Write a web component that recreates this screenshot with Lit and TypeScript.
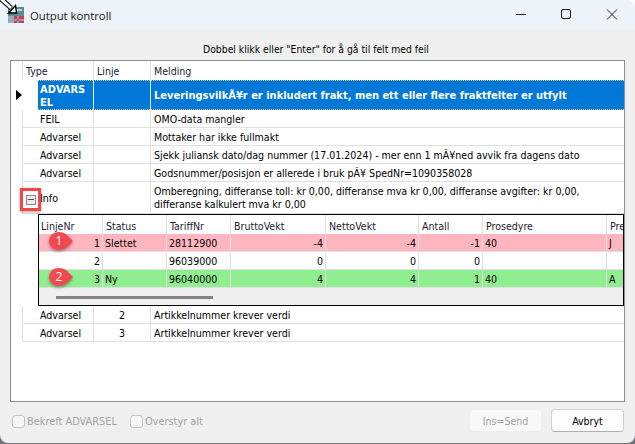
import { LitElement, html, css } from "lit";
import { customElement } from "lit/decorators.js";

const msgs = [
  { t: "FEIL", l: "", m: "OMO-data mangler" },
  { t: "Advarsel", l: "", m: "Mottaker har ikke fullmakt" },
  { t: "Advarsel", l: "", m: "Sjekk juliansk dato/dag nummer (17.01.2024) - mer enn 1 mÃ¥ned avvik fra dagens dato" },
  { t: "Advarsel", l: "", m: "Godsnummer/posisjon er allerede i bruk pÃ¥ SpedNr=1090358028" },
];
const sub = [
  { c: "pink", v: ["1", "Slettet", "28112900", "-4", "-4", "-1", "40", "J"] },
  { c: "", v: ["2", "", "96039000", "0", "0", "0", "", ""] },
  { c: "green", v: ["3", "Ny", "96040000", "4", "4", "1", "40", "A"] },
];
const subHead = ["LinjeNr", "Status", "TariffNr", "BruttoVekt", "NettoVekt", "Antall", "Prosedyre", "Pre"];
const rightCols = new Set([0, 3, 4, 5]);

@customElement("app-root")
export class AppRoot extends LitElement {
  static styles = css`
    :host { display: block; width: 635px; height: 444px; background: linear-gradient(#ffffff 0 50%, #74787d 50% 100%); overflow: hidden; position: relative; }
    * { box-sizing: border-box; }
    .win { width: 635px; height: 443px; background: #f0f0f0; border-radius: 8px; overflow: hidden; display: flex; flex-direction: column;
      font: 10.55px "DejaVu Sans Condensed", "DejaVu Sans", sans-serif; color: #000; }
    .title { height: 30px; flex: none; background: #eef2f9; display: flex; align-items: center; padding-left: 8px; }
    .title span { margin-left: 6px; font: 11.3px "Open Sans", sans-serif; color: #1a1a1a; }
    .winbtns { margin-left: auto; display: flex; }
    .winbtns svg { width: 46px; height: 30px; display: block; }
    .hint { height: 30px; flex: none; display: flex; align-items: center; justify-content: center; padding-top: 7px; padding-right: 3px; color: #000; font-size: 10.3px; }
    .grid { margin: 0 10px; width: 615px; height: 342px; flex: none; background: #fff; border: 1px solid #8a8f96; display: flex; flex-direction: column; position: relative; }
    .row { display: grid; grid-template-columns: 11px 71px 57px 1fr; flex: none; }
    .row > div { overflow: hidden; }
    .ind { display: flex; align-items: center; justify-content: center; }
    .c { border-left: 1px solid #e0e0e0; border-bottom: 1px solid #e0e0e0; padding: 1px 0 0 3px; display: flex; align-items: center; line-height: 13px; }
    .c.tp { padding-left: 17px; }
    .c.ctr { justify-content: center; padding: 1px 0 0; }
    .head { height: 19px; }
    .head .c { border-bottom: none; color: #1c1c2e; padding-top: 2px; }
    .sel { height: 30px; }
    .sel .c { background: #0078d7; color: #fff; font-weight: 700; font-size: 11px; border-color: #e8e8e8; padding-left: 3px; }
    .sel .c.tp { margin-left: 16px; border-left: none; padding-left: 2px; padding-right: 0; }
    .sel .bar { border-top: 1px dotted #f0c080; border-bottom: 1px dotted #f0c080; }
    .r18 { height: 18px; }
    .r31 { height: 32px; }
    .exp { position: absolute; left: 9px; top: 127px; width: 21px; height: 23px; border: 3px solid #f04848; display: flex; align-items: center; justify-content: center; box-shadow: 0 1px 3px rgba(0,0,0,.35); }
    .exp i { width: 10px; height: 10px; border: 1px solid #8a8a8a; background: #ececec; display: block; position: relative; }
    .exp i::after { content: ""; position: absolute; left: 1px; right: 1px; top: 3px; height: 1px; background: #404a60; }
    .nest { margin-left: 27px; height: 92px; flex: none; border: 1px solid #000; background: #f0f0f0; overflow: hidden; display: flex; flex-direction: column; position: relative; }
    .srow { display: grid; grid-template-columns: 63px 64px 64px 95px 93px 64px 124px 40px; flex: none; height: 18px; background: #fff; width: 607px; }
    .srow > div { border-left: 1px solid #e0e0e0; border-bottom: 1px solid #e0e0e0; display: flex; align-items: center; padding: 1px 2px 0 2px; white-space: nowrap; overflow: hidden; }
    .srow > div:first-child { border-left: none; }
    .srow > .rt { justify-content: flex-end; }
    .shead { height: 19px; color: #1c1c2e; }
    .shead > div { border-bottom: none; padding: 2px 2px 0 3px; }
    .shead > div:first-child { padding-left: 2px; }
    .pink { background: #ffb6c1; }
    .green { background: #90ee90; }
    .track { height: 18px; flex: none; padding: 8px 0 0 17px; }
    .thumb { width: 157px; height: 3px; background: #858585; }
    .badge { position: absolute; left: 4px; width: 44px; height: 28px; }
    .b1 { top: 14px; }
    .b2 { top: 50px; }
    .badge svg { position: absolute; inset: 0; overflow: visible; }
    .badge b { position: absolute; left: 8px; top: 4px; width: 16px; text-align: center; color: #fff; font: 400 12px "Open Sans", sans-serif; line-height: 15px; }
    .foot { flex: 1; display: flex; align-items: flex-start; padding: 7px 11px 0 12px; color: #a3a3a3; }
    .chk { display: flex; align-items: center; margin-right: 13px; height: 14px; margin-top: 5px; font-size: 10.9px; }
    .chk i { width: 13px; height: 13px; border: 1px solid #c4c4c4; border-radius: 3px; background: #f5f5f5; margin-right: 2px; display: block; }
    .spacer { flex: 1; }
    .btn { height: 23px; width: 73px; border-radius: 4px; display: flex; align-items: center; justify-content: center; font-size: 10.5px; }
    .off { background: #f8f8f8; border: 1px solid #eeeeee; color: #a0a0a0; margin-right: 9px; }
    .on { background: #fdfdfd; border: 1px solid #d0d0d0; border-bottom-color: #b0b0b0; color: #000; }
    .cursor { position: absolute; left: 0; top: 0; }
  `;

  render() {
    return html`
      <div class="win">
        <div class="title">
          <svg width="16" height="16" viewBox="0 0 16 16">
            <rect x="0" y="0" width="16" height="9" fill="#5f8a96"/>
            <rect x="8" y="2" width="6" height="2" fill="#c4d4d9"/>
            <rect x="0" y="9" width="16" height="7" fill="#8fb0ba"/>
            <rect x="6" y="9" width="10" height="7" fill="#e0343c"/>
            <rect x="6" y="12" width="10" height="2" fill="#f0f0f0"/>
            <rect x="9" y="9" width="2" height="7" fill="#f0f0f0"/>
            <rect x="6" y="12.5" width="10" height="1" fill="#2a4a8c"/>
            <rect x="9.5" y="9" width="1" height="7" fill="#2a4a8c"/>
          </svg>
          <span>Output kontroll</span>
          <div class="winbtns">
            <svg viewBox="0 0 46 30"><path d="M19 14.5h10" stroke="#222" fill="none"/></svg>
            <svg viewBox="0 0 46 30"><rect x="18.5" y="9.5" width="9" height="9" rx="1.5" stroke="#222" fill="none"/></svg>
            <svg viewBox="0 0 46 30"><path d="M18 9.5l10 10M28 9.5l-10 10" stroke="#222" fill="none"/></svg>
          </div>
        </div>
        <div class="hint">Dobbel klikk eller "Enter" for å gå til felt med feil</div>
        <div class="grid">
          <div class="row head">
            <div class="ind"></div>
            <div class="c">Type</div><div class="c">Linje</div><div class="c">Melding</div>
          </div>
          <div class="row sel">
            <div class="ind">
              <svg width="6" height="10" viewBox="0 0 6 10" style="margin-left:4px"><path d="M0 0l6 5-6 5z" fill="#000"/></svg>
            </div>
            <div class="c tp bar"><span>ADVARS<br />EL</span></div>
            <div class="c bar"></div>
            <div class="c bar">LeveringsvilkÃ¥r er inkludert frakt, men ett eller flere fraktfelter er utfylt</div>
          </div>
          ${msgs.map((m) => html`
            <div class="row r18">
              <div class="ind"></div>
              <div class="c tp">${m.t}</div><div class="c">${m.l}</div><div class="c">${m.m}</div>
            </div>`)}
          <div class="row r31">
            <div class="ind"></div>
            <div class="c tp">Info</div><div class="c"></div>
            <div class="c"><span>Omberegning, differanse toll: kr 0,00, differanse mva kr 0,00, differanse avgifter: kr 0,00,<br />differanse kalkulert mva kr 0,00</span></div>
          </div>
          <div class="nest">
            <div class="srow shead">${subHead.map((h) => html`<div>${h}</div>`)}</div>
            ${sub.map((r) => html`
              <div class="srow ${r.c}">${r.v.map((v, i) => html`<div class="${rightCols.has(i) ? "rt" : ""}">${v}</div>`)}</div>`)}
            <div class="track"><div class="thumb"></div></div>
            <div class="badge b1">${this.badge("1")}</div>
            <div class="badge b2">${this.badge("2")}</div>
          </div>
          <div class="row r18">
            <div class="ind"></div>
            <div class="c tp">Advarsel</div><div class="c ctr">2</div><div class="c">Artikkelnummer krever verdi</div>
          </div>
          <div class="row r18">
            <div class="ind"></div>
            <div class="c tp">Advarsel</div><div class="c ctr">3</div><div class="c">Artikkelnummer krever verdi</div>
          </div>
          <div class="exp"><i></i></div>
        </div>
        <div class="foot">
          <div class="chk"><i></i>Bekreft ADVARSEL</div>
          <div class="chk"><i></i>Overstyr alt</div>
          <div class="spacer"></div>
          <div class="btn off">Ins=Send</div>
          <div class="btn on">Avbryt</div>
        </div>
      </div>
      <svg class="cursor" width="22" height="16" viewBox="0 0 22 16">
        <path d="M-1 -3L11 8" stroke="#000" stroke-width="5" fill="none"/>
        <path d="M-1 -3L11 8" stroke="#fff" stroke-width="3" fill="none"/>
        <path d="M16.5 13H8.5L15.5 5.5z" fill="#fff" stroke="#000" stroke-width="1.4"/>
      </svg>
    `;
  }

  badge(n: string) {
    return html`
      <svg width="44" height="28" viewBox="0 0 44 28">
        <defs><filter id="s${n}" x="-30%" y="-30%" width="160%" height="170%"><feDropShadow dx="0" dy="1.5" stdDeviation="1.5" flood-color="#000" flood-opacity=".4"/></filter></defs>
        <path d="M15 3c4 0 7 1 9 3l6 6-6 6c-2 2-5 3-9 3a9 9 0 0 1 0-18z" fill="#f0484f" filter="url(#s${n})"/>
      </svg>
      <b>${n}</b>`;
  }
}
